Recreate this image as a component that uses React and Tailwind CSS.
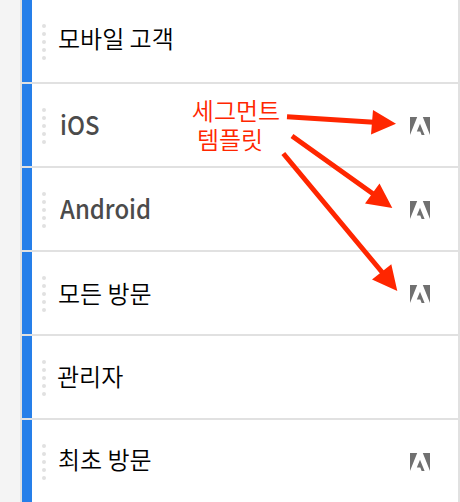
const rows = [
  { label: '모바일 고객', offset: 'pb-1.5 pl-px' },
  { label: 'iOS', latin: true, template: true, offset: 'pb-0.5' },
  { label: 'Android', latin: true, template: true, offset: 'pb-0.5' },
  { label: '모든 방문', template: true, offset: 'pl-px' },
  { label: '관리자', offset: 'pb-0.5' },
  { label: '최초 방문', template: true, offset: 'pb-1 pl-px' },
];

function DragHandle() {
  return (
    <div className="ml-2.5 flex flex-col gap-1 pt-0.5">
      {[0, 1, 2, 3, 4].map((i) => (
        <span key={i} className="size-1 rounded-full bg-[#e1e1e1]" />
      ))}
    </div>
  );
}

function AdobeIcon() {
  return (
    <svg className="mt-0.5 mr-7 ml-auto h-[18px] w-5 fill-[#707070]" viewBox="0 0 20 18" preserveAspectRatio="none">
      <path d="M0 0H7.2L0 18ZM12.8 0H20V18ZM10 6.8L14.6 18H11.6L10.3 14.6H6.8Z" />
    </svg>
  );
}

function SegmentRow({ label, latin, template, offset }) {
  return (
    <li className="flex h-[84px] items-center border-b-2 border-[#e1e1e1]">
      <span className="w-2.5 self-stretch bg-[#267fe9]" />
      <DragHandle />
      <div className={offset}>
        <span
          className={
            latin
              ? 'ml-3.5 block origin-left scale-x-92 text-[26px] leading-8 font-medium text-[#4b4b4b]'
              : 'ml-[11px] block text-[24px] leading-8 font-[350] text-black'
          }
        >
          {label}
        </span>
      </div>
      {template && <AdobeIcon />}
    </li>
  );
}

function Annotation() {
  return (
    <>
      <p className="absolute top-[95px] left-[181px] w-[110px] text-center text-[24px] leading-[29px] font-[350] text-[#ff2600]">
        <span className="block">세그먼트</span>
        <span className="block pr-3">템플릿</span>
      </p>
      <svg className="absolute inset-0 h-[502px] w-[460px] fill-[#ff2600] stroke-[#ff2600]" viewBox="0 0 460 502">
        <path strokeWidth="5" d="M287 116.7L374 122.3M292 136L374 194.5M283.3 153.5L384 274.5" />
        <path stroke="none" d="M373 110L396 123.8L371 134.5ZM379.5 183.5L392.3 208L365 203.5ZM391.3 264.3L397.3 291L372 279.5Z" />
      </svg>
    </>
  );
}

export default function App() {
  return (
    <main className="relative h-[502px] w-[460px] overflow-hidden bg-[#f4f4f4] pl-5 font-['Noto_Sans_CJK_KR',sans-serif]">
      <ul className="border-x-2 border-[#e1e1e1] bg-white">
        {rows.map((row) => (
          <SegmentRow key={row.label} {...row} />
        ))}
      </ul>
      <Annotation />
    </main>
  );
}
